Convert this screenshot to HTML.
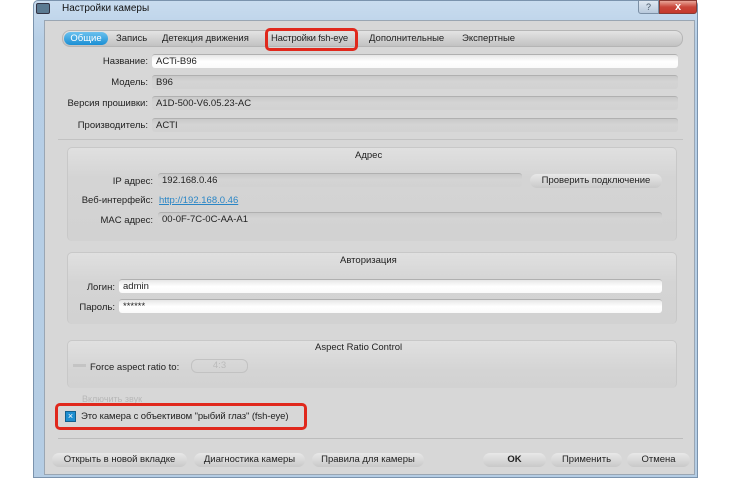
<!DOCTYPE html>
<html><head><meta charset="utf-8"><style>
*{box-sizing:border-box;margin:0;padding:0}
body{width:736px;height:478px;background:#fff;position:relative;overflow:hidden;font-family:"Liberation Sans","DejaVu Sans",sans-serif;font-size:9.5px;color:#222}
.a{position:absolute}
.win{left:33px;top:0;width:665px;height:478px;background:linear-gradient(#c9dcef,#b7cfe6 40px,#b5cde4);border:1px solid #7b93ad;border-radius:5px 5px 0 0}
.panel{left:44px;top:20px;width:651px;height:455px;background:#d7d7d7;border:1px solid #9aa6b3}
.t{position:absolute;white-space:nowrap;line-height:12px}
.fld{position:absolute;height:14px;border-radius:3px;background:linear-gradient(#c9c9c9,#d4d4d4 40%,#d2d2d2);border-top:1px solid #b0b0b0;padding-left:4px;line-height:13px;font-size:9.5px;white-space:nowrap}
.wf{background:linear-gradient(#e6e6e6,#fff 50%,#fafafa)}
.lbl{position:absolute;text-align:right;line-height:12px;white-space:nowrap}
.grp{position:absolute;border-radius:5px;background:linear-gradient(#e0e0e0,#d4d4d4 30px,#d2d2d2);border:1px solid #c8c8c8;border-bottom:none}
.btn{position:absolute;height:14px;border-radius:7px;background:linear-gradient(#e8e8e8,#c9c9c9);text-align:center;line-height:14px;font-size:9.5px;white-space:nowrap}
.red{position:absolute;border:3px solid #e0281c;border-radius:5px}
</style></head><body>
<div class="a win"></div>
<div class="a" style="left:36px;top:3px;width:14px;height:11px;background:#5b7a92;border:1px solid #334;border-radius:2px"></div>
<div class="t" style="left:62px;top:3px;font-size:10px;color:#111">Настройки камеры</div>
<div class="a" style="left:638px;top:0;width:21px;height:14px;border:1px solid #7b8fa5;border-radius:0 0 0 3px;background:linear-gradient(#dfe8f2,#b8c9dc);font-size:9px;text-align:center;line-height:12px;color:#456">?</div>
<div class="a" style="left:659px;top:0;width:38px;height:14px;border:1px solid #8a3a33;border-radius:0 0 3px 0;background:linear-gradient(#e9a598,#c9463a 50%,#c5382c);font-size:11px;font-weight:bold;text-align:center;line-height:12px;color:#fff">x</div>
<div class="a panel"></div>
<div class="a" style="left:62px;top:30px;width:621px;height:17px;border-radius:8px;background:linear-gradient(#e3e3e3,#c2c2c2);border:1px solid #b5b5b5"></div>
<div class="a" style="left:64px;top:32px;width:44px;height:13px;border-radius:7px;background:linear-gradient(#6cc1ee,#1a8fd4);color:#fff;text-align:center;line-height:13px">Общие</div>
<div class="t" style="left:116px;top:33px">Запись</div>
<div class="t" style="left:162px;top:33px">Детекция движения</div>
<div class="t" style="left:271px;top:33px;letter-spacing:-0.2px">Настройки fsh-eye</div>
<div class="red" style="left:265px;top:28px;width:93px;height:23px"></div>
<div class="t" style="left:369px;top:33px">Дополнительные</div>
<div class="t" style="left:462px;top:33px">Экспертные</div>

<div class="lbl" style="left:50px;width:98px;top:56px">Название:</div>
<div class="fld wf" style="left:152px;top:54px;width:526px">ACTi-B96</div>
<div class="lbl" style="left:50px;width:98px;top:77px">Модель:</div>
<div class="fld" style="left:152px;top:75px;width:526px">B96</div>
<div class="lbl" style="left:30px;width:118px;top:98px">Версия прошивки:</div>
<div class="fld" style="left:152px;top:96px;width:526px">A1D-500-V6.05.23-AC</div>
<div class="lbl" style="left:50px;width:98px;top:120px">Производитель:</div>
<div class="fld" style="left:152px;top:118px;width:526px">ACTI</div>
<div class="a" style="left:58px;top:139px;width:625px;height:1px;background:#c2c2c2"></div>

<div class="grp" style="left:67px;top:147px;width:610px;height:94px"></div>
<div class="t" style="left:355px;top:150px">Адрес</div>
<div class="lbl" style="left:60px;width:93px;top:176px">IP адрес:</div>
<div class="fld" style="left:158px;top:173px;width:364px">192.168.0.46</div>
<div class="btn" style="left:530px;top:174px;width:132px">Проверить подключение</div>
<div class="lbl" style="left:60px;width:93px;top:195px">Веб-интерфейс:</div>
<div class="t" style="left:159px;top:195px;color:#2a86c6;text-decoration:underline">http://192.168.0.46</div>
<div class="lbl" style="left:60px;width:93px;top:215px">MAC адрес:</div>
<div class="fld" style="left:158px;top:212px;width:504px">00-0F-7C-0C-AA-A1</div>

<div class="grp" style="left:67px;top:252px;width:610px;height:72px"></div>
<div class="t" style="left:340px;top:255px">Авторизация</div>
<div class="lbl" style="left:60px;width:55px;top:282px">Логин:</div>
<div class="fld wf" style="left:119px;top:279px;width:543px">admin</div>
<div class="lbl" style="left:60px;width:55px;top:302px">Пароль:</div>
<div class="fld wf" style="left:119px;top:299px;width:543px">******</div>

<div class="grp" style="left:67px;top:340px;width:610px;height:48px"></div>
<div class="t" style="left:315px;top:342px">Aspect Ratio Control</div>
<div class="a" style="left:73px;top:364px;width:13px;height:3px;background:#c4c4c4"></div>
<div class="t" style="left:90px;top:362px">Force aspect ratio to:</div>
<div class="a" style="left:191px;top:359px;width:57px;height:14px;border-radius:6px;border:1px solid #c2c2c2;color:#bbb;text-align:center;line-height:12px">4:3</div>
<div class="t" style="left:82px;top:393px;color:#b8b8b8;font-size:9px">Включить звук</div>

<div class="red" style="left:55px;top:403px;width:252px;height:27px"></div>
<div class="a" style="left:65px;top:411px;width:11px;height:11px;background:#1d8ed0;border:1px solid #11608f;color:#fff;font-size:9px;line-height:9px;text-align:center">×</div>
<div class="t" style="left:81px;top:411px;letter-spacing:-0.1px">Это камера с объективом "рыбий глаз" (fsh-eye)</div>
<div class="a" style="left:58px;top:438px;width:625px;height:1px;background:#bcbcbc"></div>

<div class="btn" style="left:52px;top:453px;width:135px">Открыть в новой вкладке</div>
<div class="btn" style="left:194px;top:453px;width:111px">Диагностика камеры</div>
<div class="btn" style="left:312px;top:453px;width:112px">Правила для камеры</div>
<div class="btn" style="left:483px;top:453px;width:63px;font-weight:bold">OK</div>
<div class="btn" style="left:551px;top:453px;width:71px">Применить</div>
<div class="btn" style="left:627px;top:453px;width:63px">Отмена</div>
</body></html>
